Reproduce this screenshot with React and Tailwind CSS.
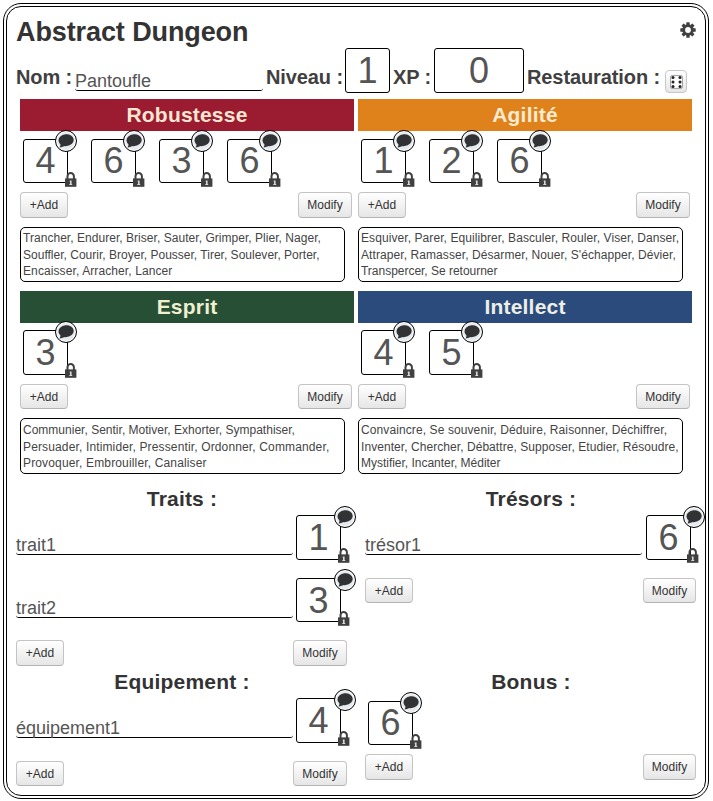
import React from "react";

function Gear() {
  return (
    <svg className="block" width="16" height="16" viewBox="0 0 16 16">
      <g fill="#404040">
        {[0, 45, 90, 135].map((a) => (
          <rect key={a} x="6.3" y="0.3" width="3.4" height="15.4" rx="0.5" transform={`rotate(${a} 8 8)`} />
        ))}
        <circle cx="8" cy="8" r="5.8" />
      </g>
      <circle cx="8" cy="8" r="2.9" fill="#fff" />
    </svg>
  );
}

function Dice() {
  return (
    <svg className="block" width="13" height="14" viewBox="0 0 13 14">
      <rect x="0.6" y="0.6" width="11.8" height="12.8" rx="1.5" fill="#fff" stroke="#777" strokeWidth="0.7" />
      {[2.6, 7, 11.4].map((y) => (
        <g key={y} fill="#222">
          <circle cx="3" cy={y} r="1.5" />
          <circle cx="10" cy={y} r="1.5" />
        </g>
      ))}
    </svg>
  );
}

function Lock() {
  return (
    <svg className="block" width="12" height="15" viewBox="0 0 12 15">
      <path d="M2.5 8V4.200a3.200 3.200 0 0 1 6.400 0V8" fill="none" stroke="#404040" strokeWidth="2" />
      <rect x="0" y="6.400" width="11.400" height="8.400" fill="#404040" />
      <path d="M4.900 8.500h1.700v3.500h.6v.9H4.300v-.9h.7V9.400h-.6z" fill="#d8d8d8" />
    </svg>
  );
}

function Bubble() {
  return (
    <svg className="block" width="16" height="14" viewBox="0 0 16 14">
      <ellipse cx="8.100" cy="6.200" rx="7.600" ry="5.900" transform="rotate(-6 8.100 6.200)" fill="#303234" />
      <path d="M2.400 8.500c.4 1.700.2 3.300-.9 4.900 2.300-.1 4.200-.8 5.500-2.200z" fill="#303234" />
    </svg>
  );
}

function Die({ value, bubble = "left-[31px]", lock = "left-[41px]", height = "h-[45px] leading-[44px]" }) {
  return (
    <div className={`relative w-[45px] shrink-0 rounded-[3px] border border-black bg-white text-center text-[36px] text-[#555] ${height}`}>
      {value}
      <div className={`absolute -top-[10px] flex h-[22px] w-[22px] items-center justify-center rounded-full border border-black bg-[#e6eaee] shadow-[inset_0_0_0_1px_#fff] ${bubble}`}>
        <Bubble />
      </div>
      <div className={`absolute top-[32px] ${lock}`}>
        <Lock />
      </div>
    </div>
  );
}

function Button({ children, className }) {
  return (
    <button className={`rounded-[4px] border border-[#c4c4c4] border-b-[#b3b3b3] bg-linear-to-b from-white to-[#e6e6e6] text-center text-[12px] leading-[24px] text-[#333] ${className}`}>
      {children}
    </button>
  );
}

function Actions({ className, height = "h-[26px]", modify = "w-[54px]" }) {
  return (
    <div className={`flex justify-between ${height} ${className}`}>
      <Button className="w-[48px]">+Add</Button>
      <Button className={modify}>Modify</Button>
    </div>
  );
}

function Attribute({ name, color, dice, lines, upper }) {
  return (
    <section className="w-[334px]">
      <h2 className={`h-[32px] text-center text-[21px] font-bold leading-[32px] tracking-[0.2px] ${color}`}>{name}</h2>
      <div className={`flex gap-[23px] pl-[3px] ${upper ? "mt-[8px]" : "mt-[7px]"}`}>
        {dice.map((d, i) => (
          <Die key={i} value={d} height={upper ? "h-[44px] leading-[42px]" : "h-[45px] leading-[44px]"} />
        ))}
      </div>
      <Actions className="mt-[9px] pr-[2px]" height={upper ? "h-[26px]" : "h-[25px]"} />
      <div className={`mt-[9px] w-[325px] rounded-[5px] border border-black bg-white pl-[2px] text-[12px] leading-[16.5px] text-[#444] ${upper ? "h-[55px] pt-[2px]" : "h-[56px] pt-[3px]"}`}>
        {lines.map(([text, spacing]) => (
          <div key={text} className={`whitespace-nowrap ${spacing}`}>{text}</div>
        ))}
      </div>
    </section>
  );
}

function Row({ label, value, height, bubble = "left-[37px]", lock, className = "w-[51px]" }) {
  return (
    <div className="flex h-[45px] items-start justify-between">
      <div className="mt-[20px] h-[20px] w-[277px] rounded-[3px] border-b border-black text-[18px] leading-[20px] text-[#555]">
        {label}
      </div>
      <div className={className}>
        <Die value={value} height={height} bubble={bubble} lock={lock} />
      </div>
    </div>
  );
}

function Heading({ children }) {
  return <h2 className="h-[30px] pl-px text-center text-[21px] font-bold leading-[30px] tracking-[0.2px] text-[#333]">{children}</h2>;
}

const attributes = [
  {
    name: "Robustesse",
    color: "bg-[#9b1b30] text-[#fde6d3]",
    upper: true,
    dice: [4, 6, 3, 6],
    lines: [
      ["Trancher, Endurer, Briser, Sauter, Grimper, Plier, Nager,", "tracking-[0.04px]"],
      ["Souffler, Courir, Broyer, Pousser, Tirer, Soulever, Porter,", "tracking-[0.01px]"],
      ["Encaisser, Arracher, Lancer", "tracking-[0.1px]"],
    ],
  },
  {
    name: "Agilité",
    color: "bg-[#df821b] text-[#fdebd0]",
    upper: true,
    dice: [1, 2, 6],
    lines: [
      ["Esquiver, Parer, Equilibrer, Basculer, Rouler, Viser, Danser,", "tracking-[0.08px]"],
      ["Attraper, Ramasser, Désarmer, Nouer, S'échapper, Dévier,", "tracking-[0.08px]"],
      ["Transpercer, Se retourner", "tracking-[-0.02px]"],
    ],
  },
  {
    name: "Esprit",
    color: "bg-[#264f36] text-[#f0f0d0]",
    dice: [3],
    lines: [
      ["Communier, Sentir, Motiver, Exhorter, Sympathiser,", "tracking-[0.01px]"],
      ["Persuader, Intimider, Pressentir, Ordonner, Commander,", "tracking-[0.14px]"],
      ["Provoquer, Embrouiller, Canaliser", "tracking-[0.15px]"],
    ],
  },
  {
    name: "Intellect",
    color: "bg-[#2a4b7c] text-[#eeeee6]",
    dice: [4, 5],
    lines: [
      ["Convaincre, Se souvenir, Déduire, Raisonner, Déchiffrer,", "tracking-[0.1px]"],
      ["Inventer, Chercher, Débattre, Supposer, Etudier, Résoudre,", "tracking-[0.06px]"],
      ["Mystifier, Incanter, Méditer", "tracking-[-0.02px]"],
    ],
  },
];

export default function App() {
  return (
    <div className="h-[801px] w-[713px] overflow-hidden bg-white pl-[3px] pt-[3px] font-['Liberation_Sans',Arial,sans-serif]">
      <main className="h-[796px] w-[706px] rounded-[18px] border-4 border-double border-black">
        <header className="flex h-[41px] justify-between pl-[9px] pr-[9px] pt-[9px]">
          <h1 className="text-[27px] font-bold leading-[32px] tracking-[-0.1px] text-[#333]">Abstract Dungeon</h1>
          <div className="pt-[6px]">
            <Gear />
          </div>
        </header>

        <div className="flex h-[45px] whitespace-nowrap pl-[9px] text-[20px] font-bold tracking-[-0.1px] text-[#404040]">
          <span className="w-[59px] pt-[14px] leading-[30px]">Nom :</span>
          <div className="mt-[23px] h-[20px] w-[188px] rounded-[3px] border-b border-black text-[18px] font-normal leading-[20px] tracking-normal text-[#555]">Pantoufle</div>
          <span className="ml-[3px] w-[79px] pt-[14px] leading-[30px]">Niveau :</span>
          <div className="h-[45px] w-[45px] rounded-[3px] border border-black text-center text-[36px] font-normal leading-[44px] text-[#555]">1</div>
          <span className="ml-[3px] w-[41px] pt-[14px] leading-[30px]">XP :</span>
          <div className="h-[45px] w-[90px] rounded-[3px] border border-black text-center text-[36px] font-normal leading-[44px] text-[#555]">0</div>
          <span className="ml-[3px] w-[138px] pt-[14px] leading-[30px]">Restauration :</span>
          <div className="mt-[22px] flex h-[23px] w-[22px] items-center justify-center rounded-[4px] border border-[#c8c8c8] bg-linear-to-b from-white to-[#e6e6e6]">
            <Dice />
          </div>
        </div>

        <div className="mt-[6px] grid h-[383px] grid-cols-[334px_334px] grid-rows-[192px_191px] gap-x-[4px] pl-[13px]">
          {attributes.map((a) => (
            <Attribute key={a.name} {...a} />
          ))}
        </div>

        <div className="flex h-[185px] gap-[18px] pl-[9px] pt-[2px]">
          <section className="w-[331px]">
            <Heading>Traits :</Heading>
            <div className="mt-px flex flex-col gap-[18px]">
              <Row label="trait1" value={1} />
              <Row label="trait2" value={3} height="h-[44px] leading-[43px]" />
            </div>
            <Actions className="mt-[17px]" />
          </section>
          <section className="w-[331px]">
            <Heading>Trésors :</Heading>
            <div className="mt-px">
              <Row label="trésor1" value={6} className="w-[50px]" bubble="left-[36px]" lock="left-[40px]" />
            </div>
            <Actions className="mt-[18px]" height="h-[25px]" modify="w-[53px]" />
          </section>
        </div>

        <div className="flex gap-[18px] pl-[9px]">
          <section className="w-[331px]">
            <Heading>Equipement :</Heading>
            <div className="mt-px">
              <Row label="équipement1" value={4} />
            </div>
            <Actions className="mt-[18px]" height="h-[25px]" />
          </section>
          <section className="w-[331px]">
            <Heading>Bonus :</Heading>
            <div className="mt-[4px] pl-[3px]">
              <Die value={6} height="h-[44px] leading-[42px]" />
            </div>
            <Actions className="mt-[9px]" modify="w-[53px]" />
          </section>
        </div>
      </main>
    </div>
  );
}
